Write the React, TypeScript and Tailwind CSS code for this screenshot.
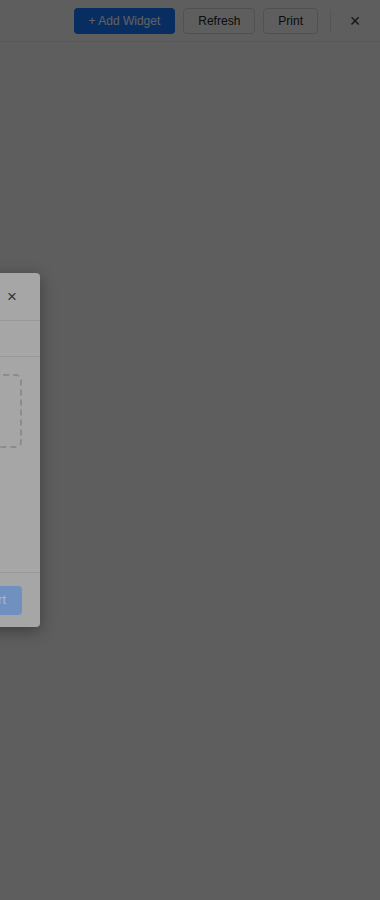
export default function App() {
  return (
    <div className="relative h-[900px] w-[380px] overflow-hidden bg-[#f7f7f7] font-['Liberation_Sans',Arial,sans-serif]">
      <header className="flex h-[42px] items-center justify-end gap-2 border-b border-[#e4e4e4] bg-[#f7f7f7] pr-[13px]">
        <button className="h-[26px] rounded-[4px] bg-[#1677ff] px-[15px] text-[12px] text-white">+ Add Widget</button>
        <button className="h-[26px] rounded-[4px] border border-[#d4d4d4] bg-[#f7f7f7] px-[14px] text-[12px] text-[#222]">
          Refresh
        </button>
        <button className="h-[26px] rounded-[4px] border border-[#d4d4d4] bg-[#f7f7f7] px-[14px] text-[12px] text-[#222]">
          Print
        </button>
        <div className="mx-[4px] h-[22px] w-px bg-[#dcdcdc]" />
        <button className="w-[24px] text-[18px] leading-none text-[#333]">×</button>
      </header>

      {/* overlay */}
      <div className="absolute inset-0 bg-black/[0.62]" />

      {/* dialog, mostly off screen to the left */}
      <div className="absolute left-[-480px] top-[273px] flex h-[354px] w-[520px] flex-col rounded-[4px] bg-[#a6a6a6] shadow-[0_4px_16px_rgba(0,0,0,0.35)]">
        <div className="flex h-[48px] items-center justify-between border-b border-[#999] pl-5 pr-[23px]">
          <span className="text-[15px] text-[#3a3a3a]">Insert Widget</span>
          <button className="text-[17px] leading-none text-[#333]">×</button>
        </div>
        <div className="flex h-[36px] items-center border-b border-[#999] px-5" />
        <div className="flex-1 px-[18px] pt-[17px]">
          <div className="h-[74px] rounded-[6px] border-2 border-dashed border-[#8c8c8c]" />
        </div>
        <div className="flex h-[55px] items-center justify-end border-t border-[#999] px-[18px]">
          <button className="h-[29px] rounded-[4px] bg-[#7090c0] px-4 text-[13px] text-[#a9bbd6]">Insert</button>
        </div>
      </div>
    </div>
  );
}
